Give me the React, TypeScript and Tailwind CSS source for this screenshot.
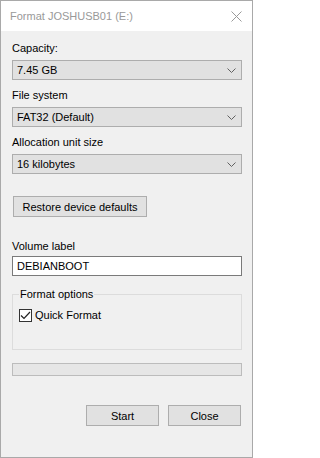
import React from 'react';

const font = { fontFamily: '"Segoe UI", "Liberation Sans", Arial, sans-serif' };

function Chevron() {
    return (
        <svg width="9" height="5" viewBox="0 0 9 5" className="shrink-0">
            <path d="M0.5 0.5 L4.5 4.5 L8.5 0.5" fill="none" stroke="#606060" strokeWidth="1" />
        </svg>
    );
}

function Combo({ value }: { value: string }) {
    return (
        <div className="flex h-[20px] w-[230px] items-center justify-between border border-[#adadad] bg-[#e1e1e1] pl-[4px] pr-[5px]">
            <span className="leading-[16px]">{value}</span>
            <Chevron />
        </div>
    );
}

function Label({ children, className = '' }: { children: React.ReactNode; className?: string }) {
    return <div className={`leading-[16px] ${className}`}>{children}</div>;
}

export default function App() {
    return (
        <div
            className="flex h-[458px] w-[253px] flex-col border border-[#a9a9a9] bg-[#f0f0f0] text-[11px] text-black"
            style={font}
        >
            {/* Title bar */}
            <div className="flex h-[30px] items-center justify-between bg-white pl-[9px] pr-[10px]">
                <span className="leading-[16px] text-[#999999]">Format JOSHUSB01 (E:)</span>
                <svg width="11" height="11" viewBox="0 0 11 11">
                    <path d="M0.5 0.5 L10.5 10.5 M10.5 0.5 L0.5 10.5" stroke="#9a9a9a" strokeWidth="1" />
                </svg>
            </div>

            {/* Body */}
            <div className="flex flex-col pl-[11px] pt-[9px]">
                <Label>Capacity:</Label>
                <div className="mt-[4px]">
                    <Combo value="7.45 GB" />
                </div>

                <Label className="mt-[7px]">File system</Label>
                <div className="mt-[4px]">
                    <Combo value="FAT32 (Default)" />
                </div>

                <Label className="mt-[7px]">Allocation unit size</Label>
                <div className="mt-[4px]">
                    <Combo value="16 kilobytes" />
                </div>

                <button
                    type="button"
                    className="ml-[1px] mt-[22px] flex h-[21px] w-[134px] items-center justify-center border border-[#adadad] bg-[#e1e1e1] leading-[16px]"
                >
                    Restore device defaults
                </button>

                <Label className="mt-[21px]">Volume label</Label>
                <input
                    readOnly
                    value="DEBIANBOOT"
                    className="mt-[2px] h-[20px] w-[230px] border border-[#7a7a7a] bg-white px-[4px] leading-[16px] outline-none"
                    style={font}
                />

                {/* Format options group */}
                <fieldset className="mt-[10px] w-[230px] border border-[#dcdcdc] px-[6px] pb-[26px]">
                    <legend className="px-[1px] leading-[16px]">Format options</legend>
                    <label className="mt-[5px] flex items-center gap-[3px] leading-[16px]">
                        <span className="flex h-[13px] w-[13px] items-center justify-center border border-[#333333] bg-white">
                            <svg width="11" height="9" viewBox="0 0 11 9">
                                <path d="M1 4.5 L4 7.5 L10 1" fill="none" stroke="#222222" strokeWidth="1.2" />
                            </svg>
                        </span>
                        <span>Quick Format</span>
                    </label>
                </fieldset>

                {/* Progress bar */}
                <div className="mt-[13px] h-[13px] w-[230px] border border-[#bcbcbc] bg-[#e6e6e6]" />

                {/* Buttons */}
                <div className="mt-[29px] flex w-[229px] justify-end gap-[9px]">
                    <button
                        type="button"
                        className="flex h-[21px] w-[73px] items-center justify-center border border-[#adadad] bg-[#e1e1e1] leading-[16px]"
                    >
                        Start
                    </button>
                    <button
                        type="button"
                        className="flex h-[21px] w-[73px] items-center justify-center border border-[#adadad] bg-[#e1e1e1] leading-[16px]"
                    >
                        Close
                    </button>
                </div>
            </div>
        </div>
    );
}
